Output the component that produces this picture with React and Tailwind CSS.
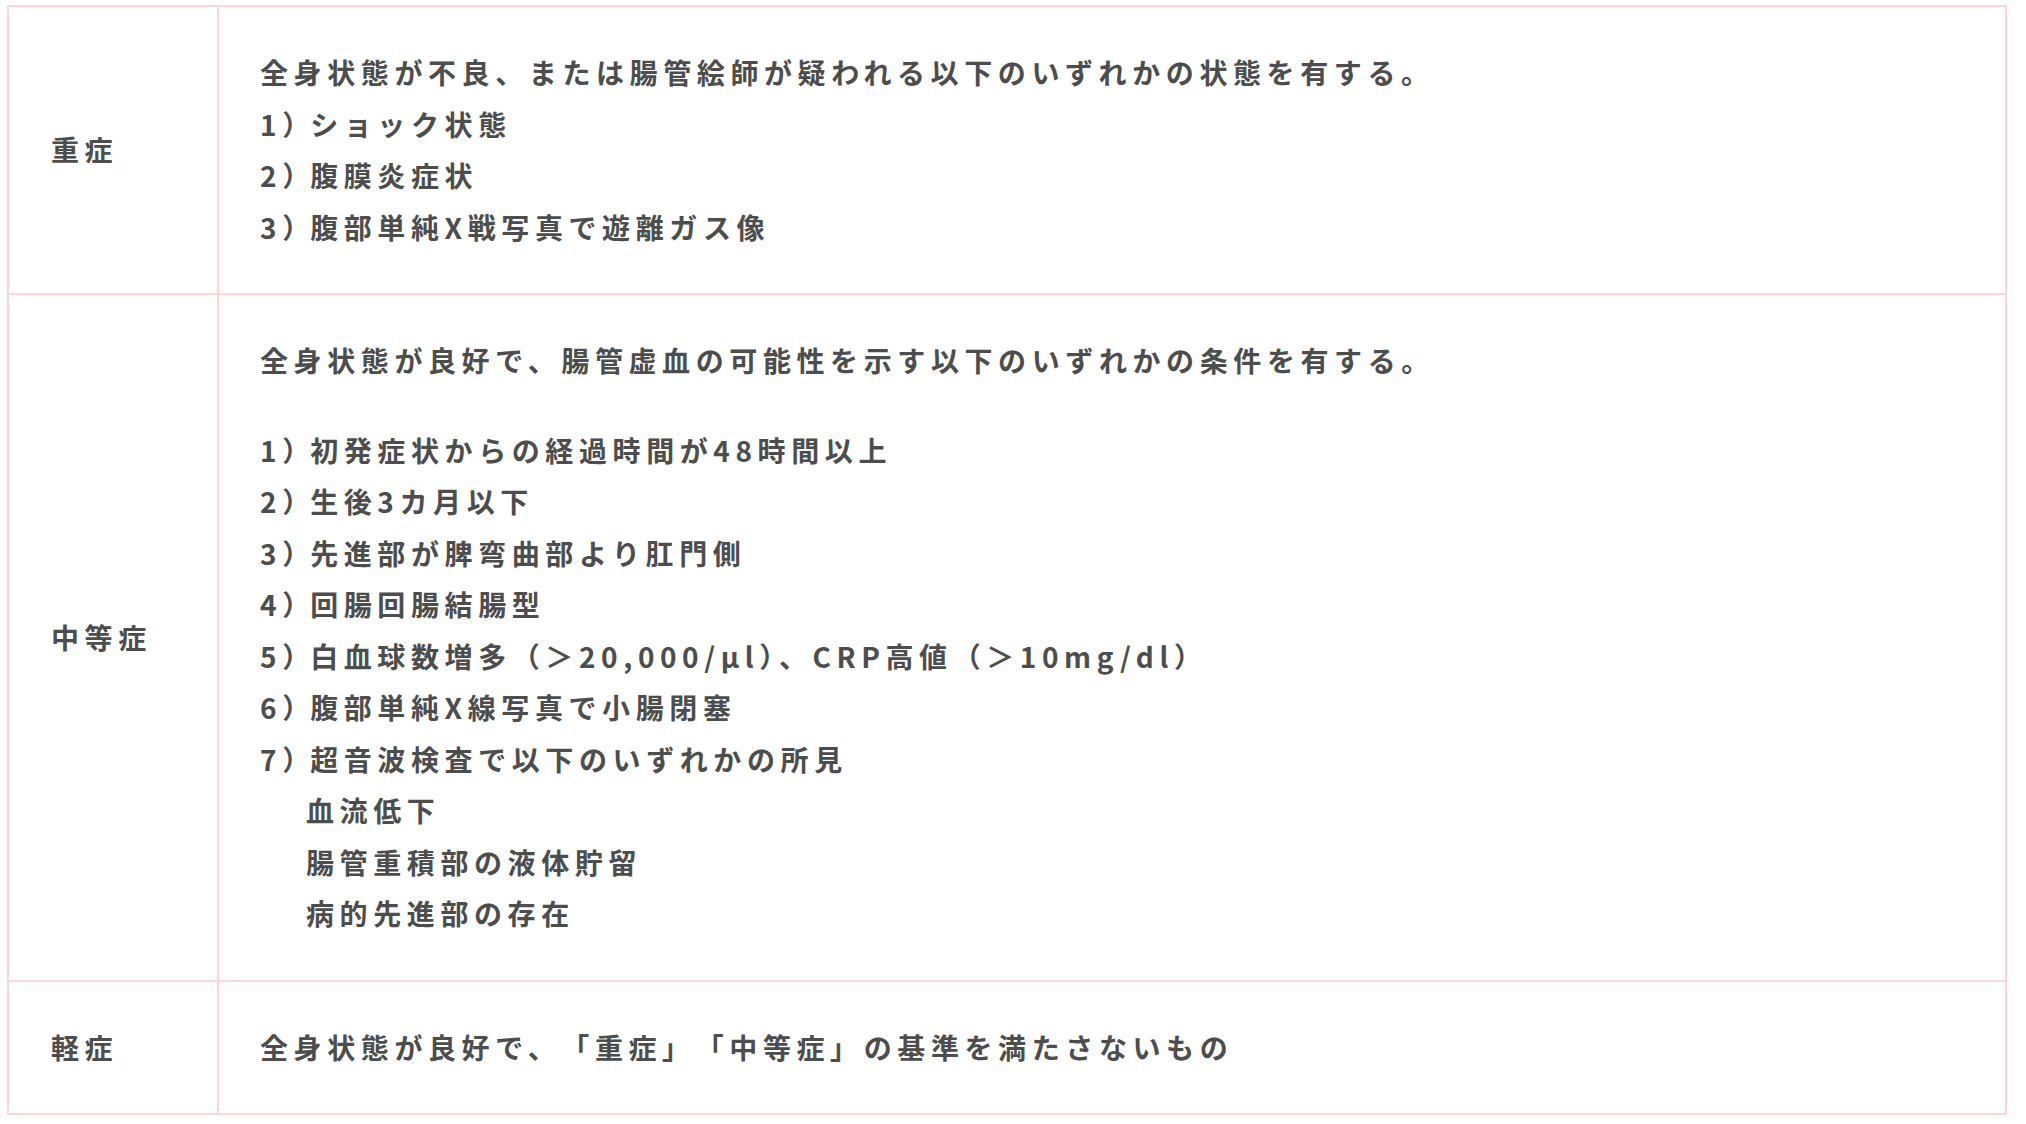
import React from 'react';

const rows = [
    {
        label: '重症',
        lead: '全身状態が不良、または腸管絵師が疑われる以下のいずれかの状態を有する。',
        gap: false,
        items: ['ショック状態', '腹膜炎症状', '腹部単純X戦写真で遊離ガス像'],
    },
    {
        label: '中等症',
        lead: '全身状態が良好で、腸管虚血の可能性を示す以下のいずれかの条件を有する。',
        gap: true,
        items: [
            '初発症状からの経過時間が48時間以上',
            '生後3カ月以下',
            '先進部が脾弯曲部より肛門側',
            '回腸回腸結腸型',
            '白血球数増多（＞20,000/μl）、CRP高値（＞10mg/dl）',
            '腹部単純X線写真で小腸閉塞',
            '超音波検査で以下のいずれかの所見',
        ],
        subItems: ['血流低下', '腸管重積部の液体貯留', '病的先進部の存在'],
    },
    {
        label: '軽症',
        lead: '全身状態が良好で、「重症」「中等症」の基準を満たさないもの',
        gap: false,
        noTrim: true,
        items: [],
    },
];

const App = () => {
    return (
        <div className="min-h-screen bg-white pt-[5px] pl-[7px] font-['Noto_Sans_CJK_JP','Noto_Sans',sans-serif]">
            <table className="w-[2000px] border-collapse border-2 border-[#ffd6d6] text-[28px] leading-[51.5px] tracking-[0.2em] font-bold text-[#4d4d4d]">
                <tbody>
                    {rows.map((row) => (
                        <tr key={row.label}>
                            <td className="w-[210px] border-2 border-[#ffd6d6] px-[42px] py-[40px] align-middle whitespace-nowrap">
                                {row.label}
                            </td>
                            <td className="border-2 border-[#ffd6d6] px-[41px] py-[40px] align-top">
                                <p className={(row.gap ? 'mb-[38px] ' : '') + (row.noTrim ? '[text-spacing-trim:space-all]' : '')}>
                                    {row.lead}
                                </p>
                                {row.items.map((item, i) => (
                                    <p key={item}>
                                        {i + 1}<span className="tracking-normal">）</span>{item}
                                    </p>
                                ))}
                                {row.subItems && row.subItems.map((item) => (
                                    <p key={item} className="pl-[46px]">{item}</p>
                                ))}
                            </td>
                        </tr>
                    ))}
                </tbody>
            </table>
        </div>
    );
};

export default App;
